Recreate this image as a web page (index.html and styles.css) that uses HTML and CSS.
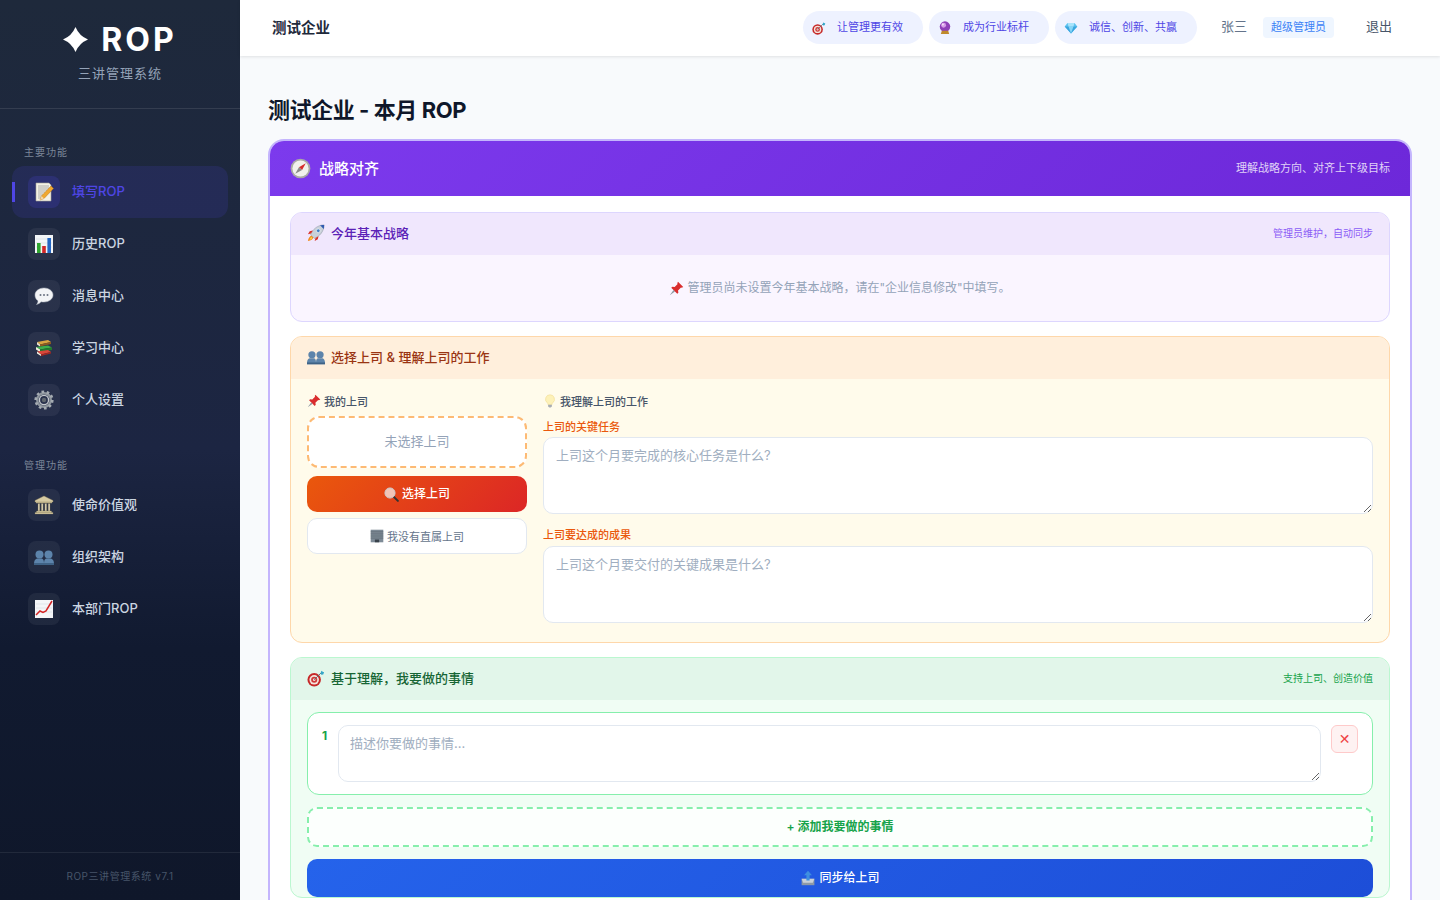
FILE: index.html
```html
<!DOCTYPE html>
<html lang="zh">
<head>
  <title>ROP三讲管理系统</title>
  <meta name="viewport" content="width=device-width, initial-scale=1">
  <link rel="stylesheet" href="styles.css">
</head>
<body>
  <!-- Emoji drawn as symbols, no colour emoji font here -->
  <svg class="defs" width="0" height="0">
    <symbol id="i-star" viewBox="0 0 24 24">
      <path d="M12 0Q15.500 8.500 24 12Q15.500 15.500 12 24Q8.500 15.500 0 12Q8.500 8.500 12 0Z" fill="#fff"/>
    </symbol>
    <symbol id="i-memo" viewBox="0 0 20 20">
      <path d="M2 1h13l2 2v16H2z" fill="#f4f1e6" stroke="#a8a594" stroke-width=".6"/>
      <path d="M4 4h11M4 6h11M4 8h9M4 10h7M4 12h5M4 14h4M4 16h3" stroke="#8f8f8f" stroke-width=".7"/>
      <path d="M17 4l2.500 2.500-9.500 10L6 18l1.500-4z" fill="#f0a830" stroke="#b87414" stroke-width=".5"/>
      <path d="M7.500 14l2.500 2.500L6 18z" fill="#f3d6a8"/>
    </symbol>
    <symbol id="i-chart" viewBox="0 0 20 20">
      <rect x="1" y="1" width="18" height="18" fill="#f4f6f8"/>
      <path d="M2 5h16M2 9h16M2 13h16" stroke="#cfd6dc" stroke-width=".5"/>
      <rect x="3" y="9" width="3.600" height="10" fill="#2fa52f"/>
      <rect x="8.200" y="12" width="3.600" height="7" fill="#d32626"/>
      <rect x="13.400" y="4" width="3.600" height="15" fill="#2467c4"/>
    </symbol>
    <symbol id="i-speech" viewBox="0 0 20 20">
      <path d="M10 2c5 0 9 3 9 7s-4 7-9 7c-1 0-2 0-3-.3C6 17 4.500 18 2.500 18.500c1-1 1.500-2.300 1.500-3.700C2 13.500 1 11.400 1 9c0-4 4-7 9-7z" fill="#f3f4f6" stroke="#b6bcc4" stroke-width=".5"/>
      <circle cx="6.500" cy="9" r="1" fill="#6b7280"/><circle cx="10" cy="9" r="1" fill="#6b7280"/><circle cx="13.500" cy="9" r="1" fill="#6b7280"/>
    </symbol>
    <symbol id="i-books" viewBox="0 0 20 20">
      <path d="M3 4l11-2 3 2-11 2.500z" fill="#d9a441"/>
      <path d="M3 4l3 2.500v2L3 6.500z" fill="#f0e6cc"/><path d="M6 6.500l11-2.500v2L6 8.500z" fill="#8f5a1f"/>
      <path d="M2 9l12-1.500 4 2L6 11.500z" fill="#3fae4a"/><path d="M2 9l4 2.500V14l-4-2.500z" fill="#f4f1e0"/><path d="M6 11.500l12-2V12L6 14z" fill="#217a2e"/>
      <path d="M3 13.500l11-1.500 3 2-10 2.500z" fill="#d9463a"/><path d="M3 13.500l4 3V18l-4-2.500z" fill="#f4f1e0"/><path d="M7 16.500l10-2.500v1.500L7 18z" fill="#a32720"/>
    </symbol>
    <symbol id="i-gear" viewBox="0 0 20 20">
      <circle cx="10" cy="10" r="6.800" fill="none" stroke="#8d949c" stroke-width="2.400"/>
      <circle cx="10" cy="10" r="8.300" fill="none" stroke="#a5abb2" stroke-width="2.600" stroke-dasharray="2.600 2.600"/>
      <circle cx="10" cy="10" r="4.600" fill="none" stroke="#c4c8cd" stroke-width="1.400"/>
      <circle cx="10" cy="10" r="2.200" fill="#5f666e"/>
    </symbol>
    <symbol id="i-bank" viewBox="0 0 20 20">
      <path d="M10 1l9 4.500v1.500H1V5.500z" fill="#d7cba3" stroke="#8f8460" stroke-width=".4"/>
      <rect x="2" y="7" width="16" height="1.200" fill="#b5a983"/>
      <path d="M4 8.500h1.800V16H4zM7.300 8.500h1.800V16H7.300zM10.900 8.500h1.800V16h-1.800zM14.200 8.500H16V16h-1.800z" fill="#e6dcbd" stroke="#6f6647" stroke-width=".4"/>
      <path d="M2.500 16h15v1.400h-15zM1 17.400h18V19H1z" fill="#d2c69e" stroke="#8f8460" stroke-width=".3"/>
    </symbol>
    <symbol id="i-people" viewBox="0 0 20 20">
      <g fill="#5d84ab">
        <circle cx="5.500" cy="7.500" r="4"/><path d="M0 18c0-4 .5-5.500 3-6.500h5c2 1 2 3 2 6.500z"/>
        <circle cx="14.500" cy="7.500" r="4"/><path d="M10 18c0-3.500 0-5.500 2-6.500h5c2.500 1 3 2.500 3 6.500z"/>
      </g>
      <path d="M0 16h20v2H0z" fill="#3f6285"/>
    </symbol>
    <symbol id="i-up" viewBox="0 0 20 20">
      <rect x="1" y="1" width="18" height="18" fill="#f4f6f8"/>
      <path d="M2 5h16M2 9h16M2 13h16" stroke="#cfd6dc" stroke-width=".5"/>
      <path d="M2 16l4-4 3 1.500 3-1.500 6-10" fill="none" stroke="#d32626" stroke-width="1.500"/>
    </symbol>
    <symbol id="i-target" viewBox="0 0 20 20">
      <circle cx="8" cy="12" r="7.500" fill="#c62828"/><circle cx="8" cy="12" r="5.300" fill="#f3e4dc"/>
      <circle cx="8" cy="12" r="3.400" fill="#d13a3a"/><circle cx="8" cy="12" r="1.400" fill="#f3e4dc"/>
      <path d="M8 12l8-8" stroke="#5b6b73" stroke-width="1"/>
      <path d="M15 5l1-3 1.500 1 1.500.500-1 2.500-2 .5z" fill="#35a7c9"/>
    </symbol>
    <symbol id="i-ball" viewBox="0 0 20 20">
      <circle cx="10" cy="8" r="7.500" fill="#8f3fb8"/><circle cx="8" cy="6" r="3.500" fill="#d79be8"/><circle cx="7" cy="5" r="1.300" fill="#f7e6fb"/>
      <path d="M5.500 14h9l1.500 4.500H4z" fill="#c08a2c"/>
    </symbol>
    <symbol id="i-gem" viewBox="0 0 20 20">
      <path d="M5 3h10l4 5-9 10L1 8z" fill="#5ec3f0"/>
      <path d="M1 8h18L10 18z" fill="#3aa5de"/><path d="M6.500 8h7L10 18z" fill="#86d6f7"/>
      <path d="M5 3l1.500 5h7L15 3z" fill="#a8e4fb"/>
    </symbol>
    <symbol id="i-compass" viewBox="0 0 20 20">
      <circle cx="10" cy="10" r="9.400" fill="#a9a9a6"/><circle cx="10" cy="10" r="7.700" fill="#f2f1ec"/>
      <path d="M15 5l-6.500 3.800L11.500 11.500z" fill="#d62b2b"/><path d="M5 15l3.500-6.200 3 2.700z" fill="#8a8a88"/>
    </symbol>
    <symbol id="i-rocket" viewBox="0 0 20 20">
      <path d="M4 12C6 6 12 1 19 1c0 7-5 13-11 15z" fill="#c9d1da" stroke="#7f8a96" stroke-width=".5"/>
      <path d="M14.500 1.500c1.500-.4 3.300-.5 4.500-.5 0 1.300 0 3.200-.5 4.500z" fill="#2f5bb0"/>
      <circle cx="12.500" cy="7.500" r="2" fill="#3f7cc4" stroke="#fff" stroke-width=".6"/>
      <path d="M4.500 10.500L1 11.500 3 8l3.500-.8zM9.500 15.500L8.500 19l3.500-2 .8-3.500z" fill="#d8332c"/>
      <path d="M5 13c-2 .5-3.500 2.500-4 6 3.500-.5 5.500-2 6-4z" fill="#f08a1d"/>
      <path d="M5 14.500c-1 .4-1.600 1.300-2 3 1.700-.4 2.700-1 3-2z" fill="#fcd34d"/>
    </symbol>
    <symbol id="i-pin" viewBox="0 0 20 20">
      <path d="M12 1l7 7-2 1-1-.5-4 4 .5 3-1.500 1.500-8-8L4.500 7.500l3 .5 4-4L11 3z" fill="#d92d2d"/>
      <path d="M6 12l-5 7 7-5z" fill="#8d98a3"/>
    </symbol>
    <symbol id="i-bulb" viewBox="0 0 20 20">
      <path d="M10 1a6.500 6.500 0 0 0-4 11.600c.8.700 1 1.400 1 2.400h6c0-1 .2-1.700 1-2.400A6.500 6.500 0 0 0 10 1z" fill="#fdf1b8" stroke="#e8cf72" stroke-width=".5"/>
      <path d="M7.300 15.500h5.400V18L11 19.300H9L7.300 18z" fill="#a9adb3"/>
    </symbol>
    <symbol id="i-search" viewBox="0 0 20 20">
      <path d="M12 12l6.500 6.500" stroke="#333" stroke-width="2.600" stroke-linecap="round"/>
      <circle cx="8" cy="8" r="6.800" fill="#f2c4b6" stroke="#c8ccd0" stroke-width="1.200"/>
    </symbol>
    <symbol id="i-office" viewBox="0 0 20 20">
      <rect x="1" y="1" width="18" height="18" fill="#7d8a96"/>
      <path d="M1 4h18M1 7h18M1 10h18M1 13h18" stroke="#5b6771" stroke-width="1"/>
      <rect x="7" y="15" width="6" height="4" fill="#38424b"/>
    </symbol>
    <symbol id="i-outbox" viewBox="0 0 20 20">
      <path d="M2 11h16v8H2z" fill="#8d99a6"/>
      <path d="M2 11l2 5h12l2-5z" fill="#c8d0d8"/>
      <path d="M10 1l5 5.500h-3V13H8V6.500H5z" fill="#3f8fe0"/>
    </symbol>
  </svg>

  <div class="app">
    <!-- Sidebar -->
    <aside class="sidebar">
      <div class="brand">
        <div class="brand-name"><svg class="brand-star"><use href="#i-star"/></svg><span>ROP</span></div>
        <div class="brand-sub">三讲管理系统</div>
      </div>
      <nav class="nav">
        <div class="nav-label">主要功能</div>
        <a class="nav-item active"><span class="nav-icon"><svg><use href="#i-memo"/></svg></span><span class="nav-text">填写ROP</span></a>
        <a class="nav-item"><span class="nav-icon"><svg><use href="#i-chart"/></svg></span><span class="nav-text">历史ROP</span></a>
        <a class="nav-item"><span class="nav-icon"><svg><use href="#i-speech"/></svg></span><span class="nav-text">消息中心</span></a>
        <a class="nav-item"><span class="nav-icon"><svg><use href="#i-books"/></svg></span><span class="nav-text">学习中心</span></a>
        <a class="nav-item"><span class="nav-icon"><svg><use href="#i-gear"/></svg></span><span class="nav-text">个人设置</span></a>
        <div class="nav-label second">管理功能</div>
        <a class="nav-item"><span class="nav-icon"><svg><use href="#i-bank"/></svg></span><span class="nav-text">使命价值观</span></a>
        <a class="nav-item"><span class="nav-icon"><svg><use href="#i-people"/></svg></span><span class="nav-text">组织架构</span></a>
        <a class="nav-item"><span class="nav-icon"><svg><use href="#i-up"/></svg></span><span class="nav-text">本部门ROP</span></a>
      </nav>
      <div class="side-foot">ROP三讲管理系统 v7.1</div>
    </aside>

    <div class="main">
      <!-- Top bar -->
      <header class="topbar">
        <div class="company">测试企业</div>
        <div class="top-right">
          <span class="pill"><svg class="ico"><use href="#i-target"/></svg>让管理更有效</span>
          <span class="pill"><svg class="ico"><use href="#i-ball"/></svg>成为行业标杆</span>
          <span class="pill"><svg class="ico"><use href="#i-gem"/></svg>诚信、创新、共赢</span>
          <span class="user">张三</span>
          <span class="role">超级管理员</span>
          <span class="logout">退出</span>
        </div>
      </header>

      <main class="content">
        <h1 class="page-title">测试企业 - 本月 ROP</h1>

        <div class="card">
          <div class="card-head">
            <div class="card-title"><svg class="ico-lg"><use href="#i-compass"/></svg>战略对齐</div>
            <div class="card-hint">理解战略方向、对齐上下级目标</div>
          </div>
          <div class="card-body">

            <!-- Annual strategy -->
            <section class="block purple">
              <div class="block-head">
                <div class="block-title"><svg class="ico-md"><use href="#i-rocket"/></svg>今年基本战略</div>
                <div class="block-hint">管理员维护，自动同步</div>
              </div>
              <div class="block-body empty"><svg class="ico-em"><use href="#i-pin"/></svg>管理员尚未设置今年基本战略，请在"企业信息修改"中填写。</div>
            </section>

            <!-- Boss -->
            <section class="block orange">
              <div class="block-head">
                <div class="block-title"><svg class="ico-md"><use href="#i-people"/></svg>选择上司 &amp; 理解上司的工作</div>
              </div>
              <div class="block-body boss">
                <div class="boss-left">
                  <div class="field-title"><svg class="ico-sm"><use href="#i-pin"/></svg>我的上司</div>
                  <div class="boss-none">未选择上司</div>
                  <button class="btn-pick"><svg class="ico-em"><use href="#i-search"/></svg>选择上司</button>
                  <button class="btn-noboss"><svg class="ico-sm"><use href="#i-office"/></svg>我没有直属上司</button>
                </div>
                <div class="boss-right">
                  <div class="field-title"><svg class="ico-sm"><use href="#i-bulb"/></svg>我理解上司的工作</div>
                  <label class="field-label">上司的关键任务</label>
                  <textarea class="area tall" placeholder="上司这个月要完成的核心任务是什么?"></textarea>
                  <label class="field-label next">上司要达成的成果</label>
                  <textarea class="area tall" placeholder="上司这个月要交付的关键成果是什么?"></textarea>
                </div>
              </div>
            </section>

            <!-- My work -->
            <section class="block green">
              <div class="block-head">
                <div class="block-title"><svg class="ico-md"><use href="#i-target"/></svg>基于理解，我要做的事情</div>
                <div class="block-hint">支持上司、创造价值</div>
              </div>
              <div class="block-body todo">
                <div class="todo-item">
                  <span class="todo-num">1</span>
                  <textarea class="area short" placeholder="描述你要做的事情..."></textarea>
                  <button class="todo-del">✕</button>
                </div>
                <button class="btn-add">+ 添加我要做的事情</button>
                <button class="btn-sync"><svg class="ico-sync"><use href="#i-outbox"/></svg>同步给上司</button>
              </div>
            </section>

          </div>
        </div>
      </main>
    </div>
  </div>
</body>
</html>
```

FILE: styles.css
```css
* {
  box-sizing: border-box;
}

html, body {
  margin: 0;
  height: 100%;
  overflow: hidden;
}

body {
  font-family: Inter, "Noto Sans CJK SC", sans-serif;
  background-color: #f8fafc;
  color: #1e293b;
}

.defs {
  position: absolute;
}

.app {
  display: flex;
  height: 900px;
}

/* Style for the sidebar */
.sidebar {
  width: 240px;
  flex-shrink: 0;
  display: flex;
  flex-direction: column;
  background: linear-gradient(180deg, #1e293b 0%, #1c2542 50%, #111a30 72%, #0f172a 100%);
}

.brand {
  height: 109px;
  padding-top: 20px;
  border-bottom: 1px solid rgba(255, 255, 255, 0.1);
  text-align: center;
}

.brand-name {
  display: flex;
  justify-content: center;
  align-items: center;
  gap: 13px;
  height: 39px;
  font-size: 32px;
  font-weight: 700;
  letter-spacing: 3px;
  color: #fff;
}

.brand-star {
  width: 25px;
  height: 25px;
}

.brand-sub {
  margin-top: 4px;
  font-size: 13px;
  line-height: 20px;
  letter-spacing: 1px;
  color: #94a3b8;
}

.nav {
  flex: 1;
  padding: 36px 12px 0;
}

.nav-label {
  padding-left: 12px;
  height: 21px;
  font-size: 10px;
  line-height: 15px;
  letter-spacing: 1px;
  color: #7b8698;
}

.nav-label.second {
  margin-top: 32px;
}

.nav-item {
  position: relative;
  display: flex;
  align-items: center;
  gap: 12px;
  height: 52px;
  padding-left: 16px;
  border-radius: 12px;
  font-size: 13px;
  font-weight: 500;
  color: #cbd5e1;
}

.nav-text {
  padding-bottom: 2px;
  line-height: 18px;
}

.nav-item.active {
  background-color: rgba(79, 70, 229, 0.15);
  color: #4f46e5;
}

.nav-item.active::before {
  content: "";
  position: absolute;
  left: 0;
  top: 16px;
  width: 3px;
  height: 20px;
  background-color: #4f46e5;
}

.nav-icon {
  width: 32px;
  height: 32px;
  display: flex;
  align-items: center;
  justify-content: center;
  border-radius: 8px;
  background-color: rgba(255, 255, 255, 0.06);
}

.nav-item.active .nav-icon {
  background-color: rgba(79, 70, 229, 0.2);
}

.nav-icon svg {
  width: 20px;
  height: 20px;
}

.side-foot {
  height: 48px;
  border-top: 1px solid rgba(255, 255, 255, 0.08);
  font-size: 10px;
  line-height: 47px;
  letter-spacing: 0.55px;
  text-align: center;
  color: #475569;
}

.main {
  flex: 1;
  min-width: 0;
  display: flex;
  flex-direction: column;
}

/* Style for the top bar */
.topbar {
  height: 56px;
  flex-shrink: 0;
  display: flex;
  align-items: center;
  justify-content: space-between;
  padding: 0 48px 2px 32px;
  line-height: 1.4;
  background-color: #fff;
  box-shadow: 0 1px 3px rgba(0, 0, 0, 0.1);
}

.company {
  padding-top: 2px;
  font-size: 14.5px;
  font-weight: 600;
  color: #1e293b;
}

.top-right {
  display: flex;
  align-items: center;
}

.pill {
  display: flex;
  align-items: center;
  height: 33px;
  margin-right: 6px;
  padding: 2px 20px 0 9px;
  gap: 11px;
  border-radius: 17px;
  background-color: #eef2ff;
  font-size: 11px;
  color: #4f46e5;
}

.pill:nth-child(3) {
  margin-right: 24px;
}

.user {
  padding-bottom: 2px;
  font-size: 13px;
  color: #64748b;
  margin-right: 16px;
}

.role {
  height: 21px;
  padding: 0 8px;
  border-radius: 4px;
  background-color: #eff6ff;
  font-size: 11px;
  line-height: 21px;
  color: #3b82f6;
  margin-right: 32px;
}

.logout {
  padding-bottom: 2px;
  font-size: 13px;
  color: #475569;
}

.ico {
  width: 14px;
  height: 14px;
  flex-shrink: 0;
}

.ico-sm {
  width: 14px;
  height: 14px;
  flex-shrink: 0;
}

.ico-em {
  width: 15px;
  height: 15px;
  flex-shrink: 0;
}

.ico-md {
  width: 18px;
  height: 18px;
  flex-shrink: 0;
}

.ico-lg {
  width: 21px;
  height: 21px;
  flex-shrink: 0;
}

.ico-sync {
  width: 16px;
  height: 16px;
  flex-shrink: 0;
}

/* Style for the page content */
.content {
  flex: 1;
  overflow: hidden;
  padding: 38px 28px 0;
}

.page-title {
  margin: 0 0 12px;
  font-size: 22px;
  line-height: 33px;
  font-weight: 700;
  letter-spacing: -0.42px;
  color: #0f172a;
}

.card {
  border: 2px solid #c4b5fd;
  border-radius: 16px;
  background-color: #fff;
  overflow: hidden;
}

.card-head {
  height: 55px;
  display: flex;
  align-items: center;
  justify-content: space-between;
  padding: 0 20px;
  line-height: 1.4;
  background: linear-gradient(135deg, #7c3aed, #6d28d9);
  color: #fff;
}

.card-title {
  display: flex;
  align-items: center;
  gap: 8px;
  font-size: 15px;
  font-weight: 500;
}

.card-hint {
  font-size: 11px;
  color: rgba(255, 255, 255, 0.8);
}

.card-body {
  display: flex;
  flex-direction: column;
  gap: 14px;
  padding: 16px 20px;
}

/* Style for the coloured blocks */
.block {
  border: 1px solid;
  border-radius: 12px;
  overflow: hidden;
}

.block-head {
  height: 42px;
  display: flex;
  align-items: center;
  justify-content: space-between;
  padding: 0 16px 2px;
  line-height: 1.4;
}

.block-title {
  display: flex;
  align-items: center;
  gap: 6px;
  font-size: 13px;
  font-weight: 500;
}

.block-hint {
  font-size: 10px;
}

.purple {
  border-color: #ddd6fe;
  background-color: #faf5ff;
}

.purple .block-head {
  background-color: #f0e7fd;
}

.purple .block-title {
  color: #5b21b6;
}

.purple .block-hint {
  color: #8b5cf6;
}

.empty {
  display: flex;
  align-items: center;
  justify-content: center;
  gap: 3px;
  height: 66px;
  line-height: 1.4;
  font-size: 12px;
  color: #94a3b8;
}

.orange {
  border-color: #fed7aa;
  background-color: #fffbeb;
}

.orange .block-head {
  background-color: #ffefdc;
}

.orange .block-title {
  color: #9a3412;
}

.boss {
  display: flex;
  gap: 16px;
  padding: 14px 16px 19px;
}

.boss-left {
  width: 220px;
  flex-shrink: 0;
  display: flex;
  flex-direction: column;
}

.boss-right {
  flex: 1;
  min-width: 0;
  display: flex;
  flex-direction: column;
}

.field-title {
  display: flex;
  align-items: center;
  gap: 3px;
  height: 16px;
  font-size: 11px;
  font-weight: 500;
  color: #475569;
}

.boss-none {
  height: 52px;
  margin-top: 7px;
  border: 2px dashed #fdba74;
  border-radius: 12px;
  background-color: #fff;
  font-size: 13px;
  line-height: 47px;
  text-align: center;
  color: #94a3b8;
}

.btn-pick, .btn-noboss, .btn-sync {
  display: flex;
  align-items: center;
  justify-content: center;
  gap: 3px;
  font-family: inherit;
  cursor: pointer;
}

.btn-pick {
  height: 36px;
  margin-top: 8px;
  border: none;
  border-radius: 10px;
  background: linear-gradient(135deg, #ea580c, #dc2626);
  font-size: 12px;
  font-weight: 500;
  line-height: 1.4;
  color: #fff;
}

.btn-noboss {
  height: 36px;
  margin-top: 6px;
  border: 1px solid #e2e8f0;
  border-radius: 10px;
  background-color: #fff;
  font-size: 11px;
  color: #64748b;
}

.field-label {
  height: 12px;
  margin-top: 11px;
  font-size: 11px;
  line-height: 14px;
  font-weight: 500;
  color: #ea580c;
}

.field-label.next {
  margin-top: 15px;
  line-height: 12px;
}

.area {
  display: block;
  width: 100%;
  border: 1px solid #e2e8f0;
  border-radius: 10px;
  background-color: #fff;
  font-family: inherit;
  color: #1e293b;
  outline: none;
}

.area::placeholder {
  color: #a0aec0;
}

.tall {
  height: 77px;
  margin-top: 5px;
  padding: 8px 12px;
  font-size: 13px;
  line-height: 18px;
}

.green {
  border-color: #bbf7d0;
  background-color: #f0fdf4;
}

.green .block-head {
  background-color: #e2f6ea;
}

.green .block-title {
  color: #166534;
}

.green .block-hint {
  color: #16a34a;
}

.todo {
  display: flex;
  flex-direction: column;
  padding: 12px 16px 0;
}

.todo-item {
  display: flex;
  align-items: flex-start;
  height: 83px;
  padding: 12px 14px;
  border: 1px solid #86efac;
  border-radius: 12px;
  background-color: #fff;
}

.todo-num {
  width: 16px;
  flex-shrink: 0;
  font-size: 12px;
  font-weight: 700;
  line-height: 22px;
  color: #16a34a;
}

.short {
  flex: 1;
  height: 57px;
  padding: 8px 11px;
  font-size: 13px;
  line-height: 18px;
}

.todo-del {
  width: 27px;
  height: 28px;
  margin-left: 10px;
  padding: 0;
  flex-shrink: 0;
  border: 1px solid #fecaca;
  border-radius: 6px;
  background-color: #fef2f2;
  font-family: "DejaVu Sans", sans-serif;
  font-size: 14px;
  font-weight: 400;
  color: #ef4444;
  cursor: pointer;
}

.btn-add {
  height: 40px;
  margin-top: 12px;
  border: 2px dashed #86efac;
  border-radius: 10px;
  background-color: rgba(255, 255, 255, 0.8);
  font-family: inherit;
  font-size: 12px;
  font-weight: 600;
  line-height: 1.4;
  color: #16a34a;
  cursor: pointer;
}

.btn-sync {
  height: 38px;
  margin-top: 12px;
  border: none;
  border-radius: 10px;
  background: linear-gradient(135deg, #2563eb, #1d4ed8);
  font-size: 12px;
  font-weight: 500;
  line-height: 1.4;
  color: #fff;
}
```
